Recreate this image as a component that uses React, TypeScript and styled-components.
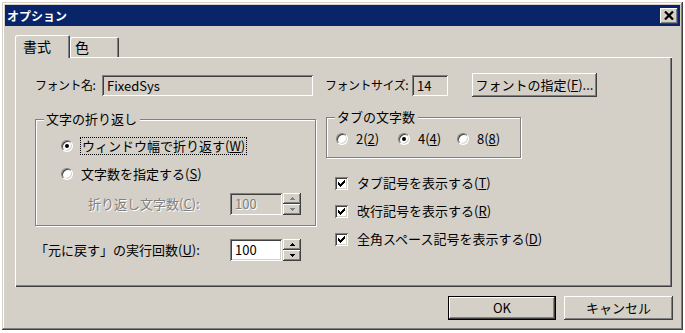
import React from 'react';
import styled, { createGlobalStyle, css } from 'styled-components';

const GlobalStyle = createGlobalStyle`
  html, body {
    margin: 0;
    padding: 0;
    background: #fff;
  }
  body {
    font-family: "Noto Sans CJK JP", "Noto Sans", sans-serif;
    font-size: 13px;
    color: #000;
  }
`;

const raised = css`
  box-shadow: inset -1px -1px #404040, inset 1px 1px #fff, inset -2px -2px #808080, inset 2px 2px #d4d0c8;
`;

const sunken = css`
  box-shadow: inset 1px 1px #808080, inset -1px -1px #fff, inset 2px 2px #404040, inset -2px -2px #d4d0c8;
`;

const Window = styled.div`
  box-sizing: border-box;
  margin: 2px;
  width: 681px;
  height: 328px;
  padding: 3px;
  background: #d4d0c8;
  box-shadow: inset -1px -1px #404040, inset 1px 1px #d4d0c8, inset -2px -2px #808080, inset 2px 2px #fff;
  display: flex;
  flex-direction: column;
`;

const TitleBar = styled.div`
  height: 21px;
  flex: 0 0 21px;
  background: #0a246a;
  display: flex;
  align-items: center;
  justify-content: space-between;
  padding: 0 2px;
`;

const Title = styled.span`
  color: #fff;
  font-weight: bold;
  font-size: 12px;
  line-height: 14px;
`;

const CloseButton = styled.div`
  box-sizing: border-box;
  width: 18px;
  height: 16px;
  background: #d4d0c8;
  display: flex;
  align-items: center;
  justify-content: center;
  ${raised}
`;

const Body = styled.div`
  flex: 1;
  display: flex;
  flex-direction: column;
  padding: 9px 8px 0 10px;
`;

const TabStrip = styled.div`
  display: flex;
  align-items: flex-end;
  height: 22px;
  flex: 0 0 22px;
`;

const Tab = styled.div<{ $active?: boolean; $w: number; $pad: number }>`
  box-sizing: border-box;
  position: relative;
  z-index: ${p => (p.$active ? 1 : 0)};
  width: ${p => p.$w}px;
  height: ${p => (p.$active ? 23 : 20)}px;
  margin-bottom: ${p => (p.$active ? -1 : 0)}px;
  padding-left: ${p => p.$pad}px;
  background: #d4d0c8;
  border-radius: 2px 2px 0 0;
  box-shadow: inset 1px 1px #fff, inset -1px 0 #404040, inset -2px 0 #808080;
  font-size: 14px;
  line-height: ${p => (p.$active ? 22 : 20)}px;
`;

const Panel = styled.div`
  box-sizing: border-box;
  height: 230px;
  flex: 0 0 230px;
  padding: 16px 20px 0 20px;
  box-shadow: inset 1px 1px #fff, inset -1px -1px #404040, inset -2px -2px #808080;
`;

const FontRow = styled.div`
  display: flex;
  align-items: center;
  height: 24px;
`;

const Label = styled.span<{ $w?: number; $ml?: number; $disabled?: boolean; $tight?: boolean }>`
  display: inline-block;
  flex: 0 0 auto;
  width: ${p => (p.$w ? `${p.$w}px` : 'auto')};
  margin-left: ${p => p.$ml ?? 0}px;
  line-height: 16px;
  white-space: nowrap;
  color: ${p => (p.$disabled ? '#808080' : '#000')};
  text-shadow: ${p => (p.$disabled ? '1px 1px 0 #fff' : 'none')};
  ${p =>
    p.$tight &&
    css`
      font-size: 12px;
      letter-spacing: -0.5px;
    `}
`;

const Field = styled.div<{ $w: number; $h?: number; $white?: boolean; $disabled?: boolean }>`
  box-sizing: border-box;
  flex: 0 0 auto;
  width: ${p => p.$w}px;
  height: ${p => p.$h ?? 21}px;
  padding: 2px 5px 0;
  background: ${p => (p.$white ? '#fff' : '#d4d0c8')};
  color: ${p => (p.$disabled ? '#808080' : '#000')};
  text-shadow: ${p => (p.$disabled ? '1px 1px 0 #fff' : 'none')};
  line-height: 17px;
  white-space: nowrap;
  ${sunken}
`;

const Button = styled.div<{ $w: number; $default?: boolean; $ml?: number }>`
  box-sizing: border-box;
  width: ${p => p.$w}px;
  height: 24px;
  margin-left: ${p => p.$ml ?? 0}px;
  display: flex;
  align-items: center;
  justify-content: center;
  background: #d4d0c8;
  line-height: 16px;
  ${raised}
  ${p =>
    p.$default &&
    css`
      border: 1px solid #000;
    `}
`;

const Columns = styled.div`
  display: flex;
  gap: 11px;
  margin-top: 20px;
`;

const Column = styled.div<{ $w: number; $pt?: number }>`
  width: ${p => p.$w}px;
  padding-top: ${p => p.$pt ?? 0}px;
  display: flex;
  flex-direction: column;
`;

const GroupBox = styled.div<{ $w: number; $h: number; $pt: number; $pl: number }>`
  box-sizing: border-box;
  position: relative;
  width: ${p => p.$w}px;
  height: ${p => p.$h}px;
  padding: ${p => p.$pt}px 0 0 ${p => p.$pl}px;
  border: 1px solid #808080;
  box-shadow: inset 1px 1px #fff, 1px 1px 0 #fff;
`;

const Legend = styled.span`
  position: absolute;
  top: -9px;
  left: 8px;
  padding: 0 3px 0 2px;
  background: #d4d0c8;
  line-height: 16px;
  white-space: nowrap;
`;

const OptionRow = styled.div<{ $mt?: number; $indent?: number }>`
  display: flex;
  align-items: center;
  height: 20px;
  margin-top: ${p => p.$mt ?? 0}px;
  padding-left: ${p => p.$indent ?? 0}px;
`;

const InlineOptions = styled.div`
  display: flex;
  align-items: center;
  height: 20px;
`;

const OptionItem = styled.div<{ $w?: number }>`
  display: flex;
  align-items: center;
  width: ${p => (p.$w ? `${p.$w}px` : 'auto')};
`;

const RadioDot = styled.span<{ $checked?: boolean }>`
  box-sizing: border-box;
  position: relative;
  flex: 0 0 12px;
  width: 12px;
  height: 12px;
  margin-right: 8px;
  border-radius: 50%;
  background: #fff;
  border: 1px solid;
  border-color: #808080 #fff #fff #808080;
  box-shadow: inset 1px 1px #404040, inset -1px -1px #d4d0c8;
  &::after {
    content: '';
    display: ${p => (p.$checked ? 'block' : 'none')};
    position: absolute;
    left: 3px;
    top: 3px;
    width: 4px;
    height: 4px;
    border-radius: 50%;
    background: #000;
  }
`;

const FocusText = styled.span`
  outline: 1px dotted #000;
  outline-offset: 0;
  padding: 0 1px;
  line-height: 16px;
  white-space: nowrap;
`;

const Text = styled.span`
  line-height: 16px;
  white-space: nowrap;
`;

const CheckBox = styled.span`
  box-sizing: border-box;
  flex: 0 0 13px;
  width: 13px;
  height: 13px;
  margin-right: 9px;
  background: #fff;
  display: flex;
  ${sunken}
`;

const SpinWrap = styled.div`
  display: flex;
  flex-direction: column;
  margin-left: 1px;
`;

const SpinButton = styled.div`
  box-sizing: border-box;
  width: 18px;
  height: 11px;
  display: flex;
  align-items: center;
  justify-content: center;
  background: #d4d0c8;
  ${raised}
`;

const ButtonRow = styled.div`
  display: flex;
  justify-content: flex-end;
  margin-top: 9px;
  margin-right: -1px;
  gap: 8px;
`;

const Mnemonic = styled.u`
  text-underline-offset: 1px;
`;

function Check() {
  const cols = [5, 6, 7, 6, 5, 4, 3];
  return (
    <svg width="13" height="13" viewBox="0 0 13 13" shapeRendering="crispEdges">
      {cols.map((y, i) => (
        <rect key={i} x={3 + i} y={y} width="1" height="3" fill="#000" />
      ))}
    </svg>
  );
}

function Arrow({ up, disabled }: { up?: boolean; disabled?: boolean }) {
  const color = disabled ? '#808080' : '#000';
  const d = up ? 'M2 0h1v1h1v1h1v1H0V2h1V1h1z' : 'M0 0h5v1H4v1H3v1H2V2H1V1H0z';
  return (
    <svg width="5" height="3" viewBox="0 0 5 3" shapeRendering="crispEdges">
      <path d={d} fill={color} />
    </svg>
  );
}

function Spinner({ disabled }: { disabled?: boolean }) {
  return (
    <SpinWrap>
      <SpinButton>
        <Arrow up disabled={disabled} />
      </SpinButton>
      <SpinButton>
        <Arrow disabled={disabled} />
      </SpinButton>
    </SpinWrap>
  );
}

function CloseIcon() {
  return (
    <svg width="10" height="9" viewBox="0 0 10 9">
      <path d="M1 0.5 L9 8.5 M9 0.5 L1 8.5" stroke="#000" strokeWidth="2.2" />
    </svg>
  );
}

export default function App() {
  return (
    <>
      <GlobalStyle />
      <Window>
        <TitleBar>
          <Title>オプション</Title>
          <CloseButton>
            <CloseIcon />
          </CloseButton>
        </TitleBar>
        <Body>
          <TabStrip>
            <Tab $active $w={55} $pad={8}>書式</Tab>
            <Tab $w={49} $pad={5}>色</Tab>
          </TabStrip>
          <Panel>
            <FontRow>
              <Label $w={67} $tight>フォント名:</Label>
              <Field $w={211}>FixedSys</Field>
              <Label $w={87} $ml={12} $tight>フォントサイズ:</Label>
              <Field $w={36}>14</Field>
              <Button $w={125} $ml={24}>
                フォントの指定(<Mnemonic>F</Mnemonic>)...
              </Button>
            </FontRow>
            <Columns>
              <Column $w={280} $pt={2}>
                <GroupBox $w={281} $h={107} $pt={16} $pl={25}>
                  <Legend>文字の折り返し</Legend>
                  <OptionRow>
                    <RadioDot $checked />
                    <FocusText>
                      ウィンドウ幅で折り返す(<Mnemonic>W</Mnemonic>)
                    </FocusText>
                  </OptionRow>
                  <OptionRow $mt={8}>
                    <RadioDot />
                    <Text>
                      文字数を指定する(<Mnemonic>S</Mnemonic>)
                    </Text>
                  </OptionRow>
                  <OptionRow $mt={10} $indent={27}>
                    <Label $w={142} $disabled>
                      折り返し文字数(<Mnemonic>C</Mnemonic>):
                    </Label>
                    <Field $w={52} $h={22} $disabled>
                      100
                    </Field>
                    <Spinner disabled />
                  </OptionRow>
                </GroupBox>
                <OptionRow $mt={14}>
                  <Label $w={195}>
                    「元に戻す」の実行回数(<Mnemonic>U</Mnemonic>):
                  </Label>
                  <Field $w={52} $h={22} $white>
                    100
                  </Field>
                  <Spinner />
                </OptionRow>
              </Column>
              <Column $w={300}>
                <GroupBox $w={195} $h={41} $pt={11} $pl={9}>
                  <Legend>タブの文字数</Legend>
                  <InlineOptions>
                    <OptionItem $w={62}>
                      <RadioDot />
                      <Text>
                        2(<Mnemonic>2</Mnemonic>)
                      </Text>
                    </OptionItem>
                    <OptionItem $w={59}>
                      <RadioDot $checked />
                      <Text>
                        4(<Mnemonic>4</Mnemonic>)
                      </Text>
                    </OptionItem>
                    <OptionItem>
                      <RadioDot />
                      <Text>
                        8(<Mnemonic>8</Mnemonic>)
                      </Text>
                    </OptionItem>
                  </InlineOptions>
                </GroupBox>
                <OptionRow $mt={15} $indent={9}>
                  <CheckBox>
                    <Check />
                  </CheckBox>
                  <Text>
                    タブ記号を表示する(<Mnemonic>T</Mnemonic>)
                  </Text>
                </OptionRow>
                <OptionRow $mt={8} $indent={9}>
                  <CheckBox>
                    <Check />
                  </CheckBox>
                  <Text>
                    改行記号を表示する(<Mnemonic>R</Mnemonic>)
                  </Text>
                </OptionRow>
                <OptionRow $mt={8} $indent={9}>
                  <CheckBox>
                    <Check />
                  </CheckBox>
                  <Text>
                    全角スペース記号を表示する(<Mnemonic>D</Mnemonic>)
                  </Text>
                </OptionRow>
              </Column>
            </Columns>
          </Panel>
          <ButtonRow>
            <Button $w={108} $default>
              OK
            </Button>
            <Button $w={109}>キャンセル</Button>
          </ButtonRow>
        </Body>
      </Window>
    </>
  );
}
